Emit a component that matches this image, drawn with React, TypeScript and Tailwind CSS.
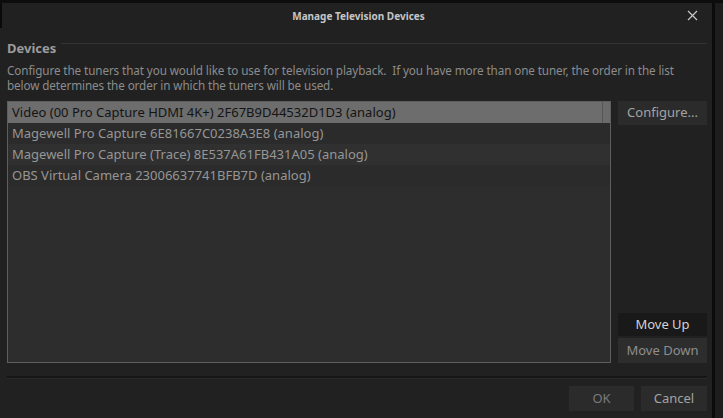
import React from "react";

const font = { fontFamily: '"Noto Sans", "Open Sans", sans-serif' };

const devices = [
  "Video (00 Pro Capture HDMI 4K+) 2F67B9D44532D1D3 (analog)",
  "Magewell Pro Capture 6E81667C0238A3E8 (analog)",
  "Magewell Pro Capture (Trace) 8E537A61FB431A05 (analog)",
  "OBS Virtual Camera 23006637741BFB7D (analog)",
];

function XIcon() {
  return (
    <svg width="11" height="11" viewBox="0 0 11 11" fill="none">
      <path d="M1 1L10 10M10 1L1 10" stroke="#c8c8c8" strokeWidth="1.2" />
    </svg>
  );
}

export default function App() {
  return (
    <div
      className="w-[723px] h-[418px] bg-[#1c1c1c] flex flex-col overflow-hidden relative"
      style={font}
    >
      {/* window edge strip */}
      <div className="h-[3px] bg-[#0d0d0d] shrink-0" />
      <div className="absolute left-0 top-[3px] w-[2px] h-[25px] bg-[#0a0a0a]" />

      <div className="flex flex-1 min-h-0">
        {/* dialog */}
        <div className="w-[712px] bg-[#212121] flex flex-col pl-[7px] pr-[5px]">
          {/* title bar */}
          <div className="h-[27px] flex items-center justify-center relative shrink-0">
            <span className="text-[10px] font-bold text-[#c6c6c6] ml-[3px]">
              Manage Television Devices
            </span>
            <span className="absolute right-[9px] top-[7px]">
              <XIcon />
            </span>
          </div>

          {/* group header */}
          <div className="flex items-start h-[24px] mt-[9px] shrink-0">
            <span className="text-[13px] font-bold text-[#9c9c9c] leading-[18px]">
              Devices
            </span>
            <div className="flex-1 h-px mt-[4px] ml-[5px] bg-[#333333]" />
          </div>

          <p className="text-[11.7px] leading-[15px] text-[#8c8c8c] shrink-0 whitespace-nowrap tracking-[-0.1px]">
            Configure the tuners that you would like to use for television playback.&nbsp; If you have
            more than one tuner, the order in the list
            <br />
            below determines the order in which the tuners will be used.
          </p>

          {/* list + side buttons */}
          <div className="flex gap-[7px] mt-[8px] h-[262px] shrink-0">
            <div className="w-[604px] border border-[#5e5e5e] bg-[#2d2d2d] flex flex-col">
              {devices.map((d, i) => (
                <div
                  key={d}
                  className={
                    i === 0
                      ? "h-[21px] flex items-center bg-[#6d6d6d] text-[#141414] text-[13px] pl-[4px]"
                      : i % 2 === 1
                      ? "h-[21px] flex items-center bg-[#2b2b2b] text-[#969696] text-[13px] pl-[4px]"
                      : "h-[21px] flex items-center bg-[#303030] text-[#969696] text-[13px] pl-[4px]"
                  }
                >
                  <span className="flex-1 whitespace-nowrap">{d}</span>
                  {i === 0 && <span className="w-[8px] h-full border-l border-[#555] bg-[#6b6b6b]" />}
                </div>
              ))}
            </div>

            <div className="flex-1 flex flex-col">
              <button className="h-[24px] bg-[#2b2b2b] text-[#a3a3a3] text-[13px]">Configure...</button>
              <div className="flex-1" />
              <button className="h-[23px] bg-[#191919] text-[#d2d2d2] text-[13px]">Move Up</button>
              <button className="h-[25px] mt-[2px] bg-[#2d2d2d] text-[#8e8e8e] text-[13px]">Move Down</button>
            </div>
          </div>

          {/* bottom separator */}
          <div className="h-[3px] mt-[13px] border-t-2 border-[#161616] border-b border-b-[#2a2a2a] shrink-0" />

          {/* dialog buttons */}
          <div className="flex justify-end gap-[7px] mt-[7px]">
            <button className="w-[65px] h-[25px] bg-[#2b2b2b] text-[#7a7a7a] text-[13px]">OK</button>
            <button className="w-[66px] h-[25px] bg-[#2b2b2b] text-[#a3a3a3] text-[13px]">Cancel</button>
          </div>
        </div>

        <div className="w-[3px] bg-[#0b0b0b]" />
        <div className="flex-1 bg-[#1d1d1d]" />
      </div>
    </div>
  );
}
